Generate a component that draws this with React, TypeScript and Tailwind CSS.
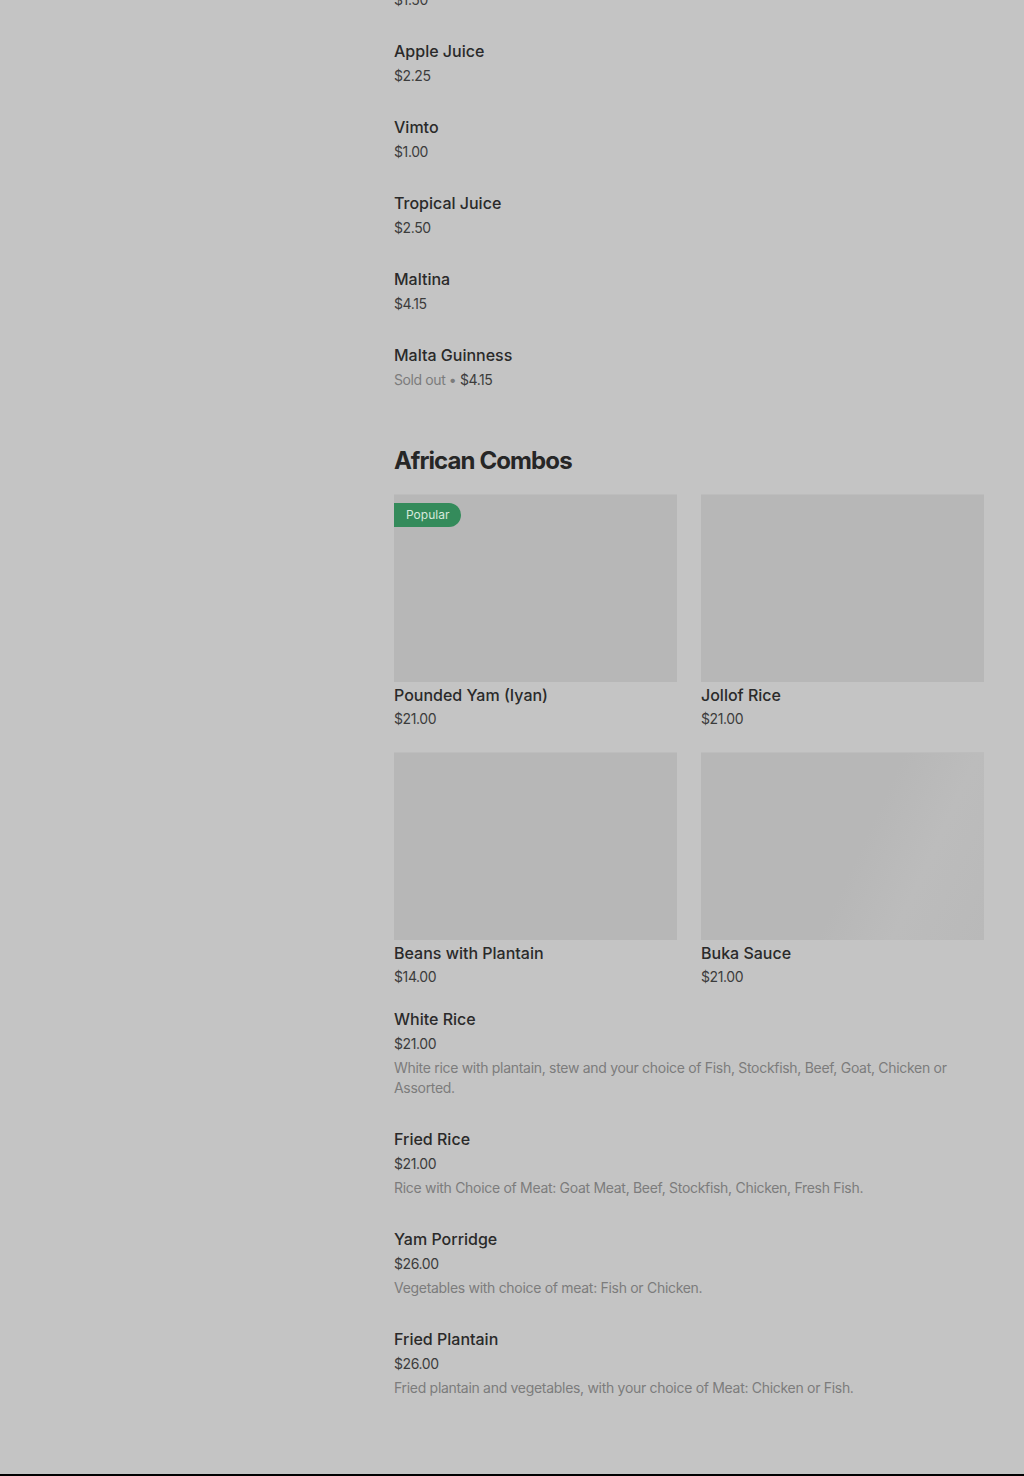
import React from "react";

const drinks = [
  { name: "Fanta", price: "$1.50" },
  { name: "Apple Juice", price: "$2.25" },
  { name: "Vimto", price: "$1.00" },
  { name: "Tropical Juice", price: "$2.50" },
  { name: "Maltina", price: "$4.15" },
  { name: "Malta Guinness", price: "$4.15", soldOut: true },
];

const cards = [
  { name: "Pounded Yam (Iyan)", price: "$21.00", popular: true },
  { name: "Jollof Rice", price: "$21.00" },
  { name: "Beans with Plantain", price: "$14.00" },
  { name: "Buka Sauce", price: "$21.00", shimmer: true },
];

const combos = [
  {
    name: "White Rice",
    price: "$21.00",
    desc: "White rice with plantain, stew and your choice of Fish, Stockfish, Beef, Goat, Chicken or Assorted.",
  },
  {
    name: "Fried Rice",
    price: "$21.00",
    desc: "Rice with Choice of Meat: Goat Meat, Beef, Stockfish, Chicken, Fresh Fish.",
  },
  {
    name: "Yam Porridge",
    price: "$26.00",
    desc: "Vegetables with choice of meat: Fish or Chicken.",
  },
  {
    name: "Fried Plantain",
    price: "$26.00",
    desc: "Fried plantain and vegetables, with your choice of Meat: Chicken or Fish.",
  },
];

export default function App() {
  return (
    <div
      className="w-[1024px] h-[1476px] overflow-hidden bg-[#c4c4c4] flex flex-col"
      style={{ fontFamily: "Inter, 'Noto Sans', sans-serif" }}
    >
      <div className="flex-1 pl-[394px] w-[984px] box-content overflow-hidden">
        <div className="w-[590px] -mt-[37px]">
          {drinks.map((d) => (
            <div key={d.name} className="pb-[27px]">
              <div className="text-[16px] leading-6 font-medium text-[#2a2a2a]">{d.name}</div>
              <div className="text-[14px] leading-6 mt-px tracking-[-0.4px] text-[#3c3c3c]">
                {d.soldOut ? (
                  <>
                    <span className="text-[#7c7c7c]">Sold out • </span>
                    {d.price}
                  </>
                ) : (
                  d.price
                )}
              </div>
            </div>
          ))}

          <h2 className="mt-[26px] text-[24px] leading-8 font-bold tracking-[-0.9px] text-[#262626]">
            African Combos
          </h2>

          <div className="mt-[17px] grid grid-cols-2 gap-x-6 gap-y-[23px]">
            {cards.map((c) => (
              <div key={c.name}>
                <div
                  className={
                    c.shimmer
                      ? "relative h-[188px] border-t border-[#bdbdbd] bg-[linear-gradient(115deg,#b7b7b7_0%,#b7b7b7_55%,#bcbcbc_75%,#b9b9b9_100%)]"
                      : "relative h-[188px] border-t border-[#bdbdbd] bg-[#b7b7b7]"
                  }
                >
                  {c.popular && (
                    <span className="absolute left-0 top-2 h-6 px-3 flex items-center rounded-r-full bg-[#348b5b] text-[12px] text-[#d6e9dc]">
                      Popular
                    </span>
                  )}
                </div>
                <div className="mt-px text-[16px] leading-6 font-medium text-[#2a2a2a]">{c.name}</div>
                <div className="mt-[2px] text-[14px] leading-5 tracking-[-0.4px] text-[#3c3c3c]">{c.price}</div>
              </div>
            ))}
          </div>

          <div className="mt-[20px]">
            {combos.map((c) => (
              <div key={c.name} className="pb-[29px]">
                <div className="text-[16px] leading-6 font-medium text-[#2a2a2a]">{c.name}</div>
                <div className="text-[14px] leading-6 mt-px tracking-[-0.4px] text-[#3c3c3c]">{c.price}</div>
                <div className="mt-[2px] text-[14px] leading-5 tracking-[-0.3px] text-[#7c7c7c]">{c.desc}</div>
              </div>
            ))}
          </div>
        </div>
      </div>
      <div className="h-[2px] bg-black" />
    </div>
  );
}
